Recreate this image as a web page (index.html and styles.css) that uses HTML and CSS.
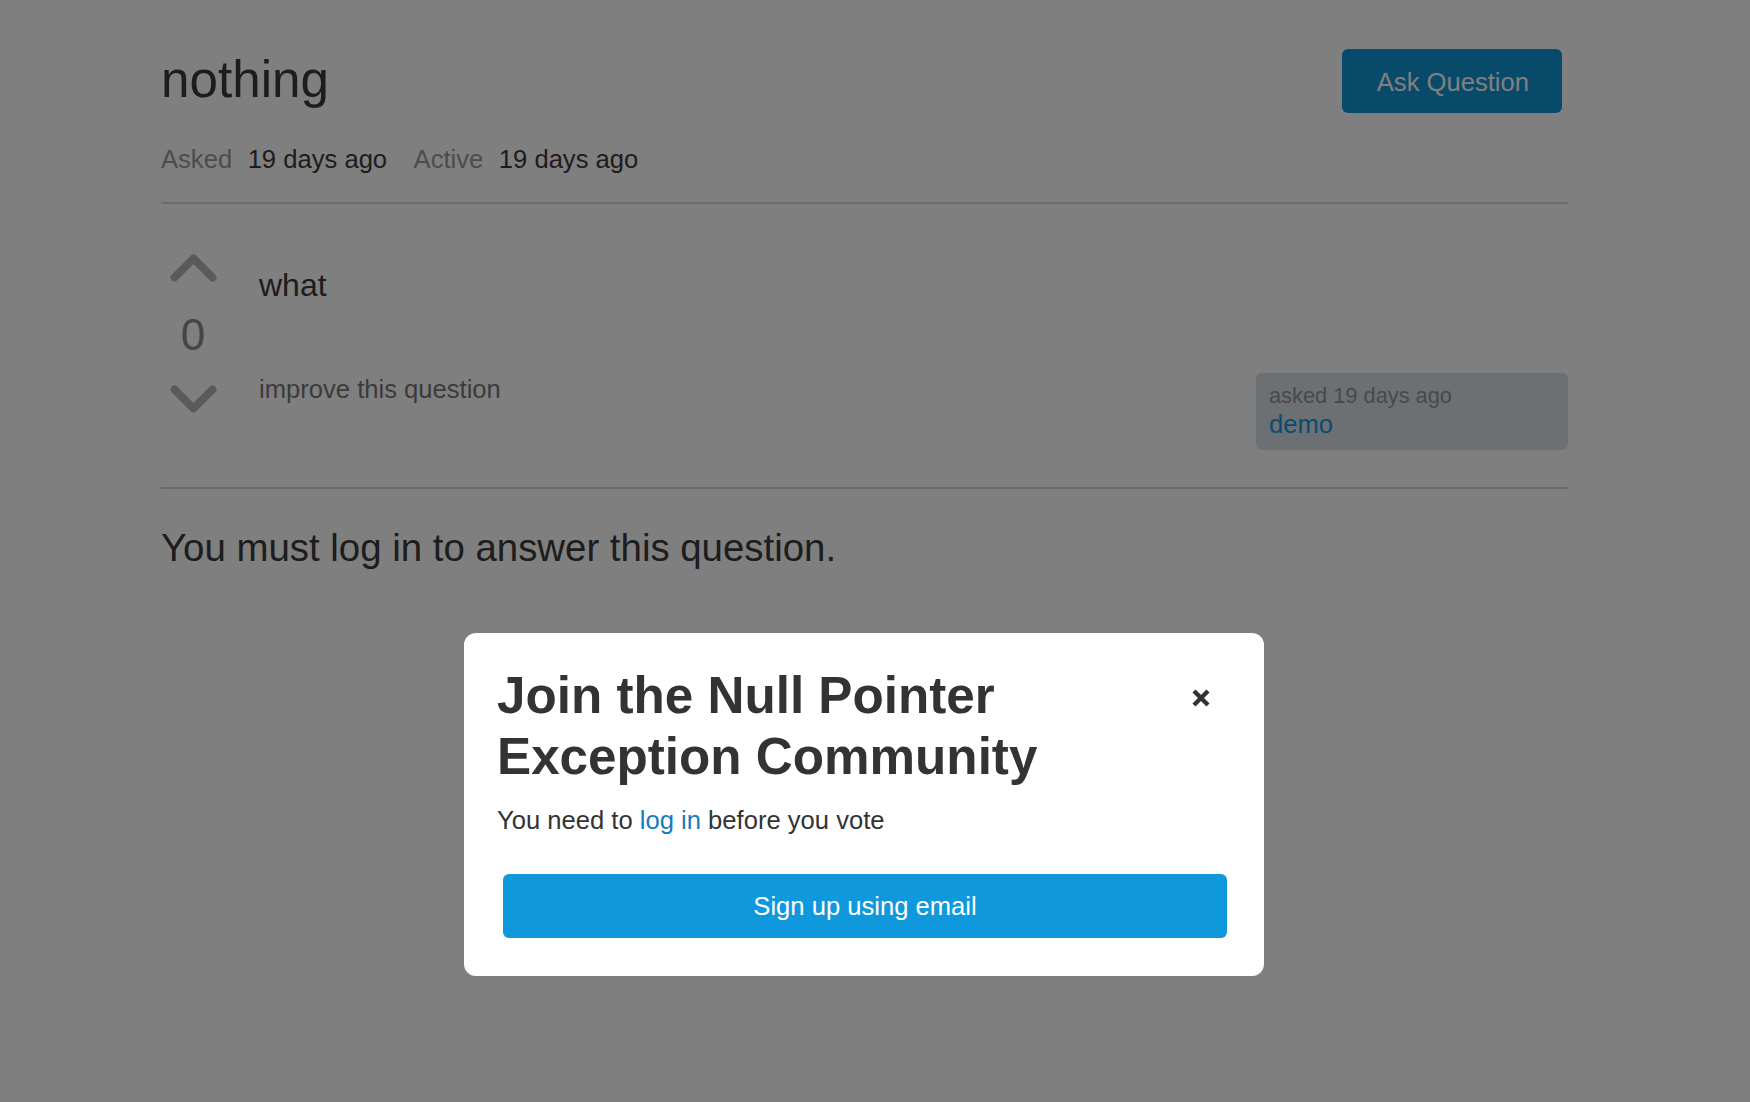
FILE: index.html
```html
<!DOCTYPE html>
<html lang="en">
<head>
<meta charset="utf-8">
<title>nothing</title>
<link rel="stylesheet" href="styles.css">
</head>
<body>
<div class="page">
  <header class="q-header">
    <h1 class="q-title">nothing</h1>
    <a class="btn-ask" href="#">Ask Question</a>
  </header>
  <div class="q-meta">
    <span class="meta-item"><span class="meta-label">Asked</span><span class="meta-value">19 days ago</span></span>
    <span class="meta-item"><span class="meta-label">Active</span><span class="meta-value">19 days ago</span></span>
  </div>
  <hr class="divider">
  <section class="post">
    <div class="vote">
      <svg class="chev" width="47" height="29" viewBox="0 0 47 29"><polyline points="4.5,24.5 23.5,5.5 42.5,24.5" fill="none" stroke="#b5b5b5" stroke-width="8" stroke-linecap="round" stroke-linejoin="round"/></svg>
      <div class="vote-count">0</div>
      <svg class="chev chev-down" width="47" height="29" viewBox="0 0 47 29"><polyline points="4.5,4.5 23.5,23.5 42.5,4.5" fill="none" stroke="#b5b5b5" stroke-width="8" stroke-linecap="round" stroke-linejoin="round"/></svg>
    </div>
    <div class="post-body">
      <p class="post-text">what</p>
      <div class="post-footer">
        <a class="improve" href="#">improve this question</a>
        <div class="author-card">
          <div class="author-time">asked 19 days ago</div>
          <a class="author-name" href="#">demo</a>
        </div>
      </div>
    </div>
  </section>
  <hr class="divider divider-2">
  <h2 class="login-note">You must log in to answer this question.</h2>
</div>

<div class="overlay">
  <div class="modal">
    <div class="modal-head">
      <h2 class="modal-title">Join the Null Pointer Exception Community</h2>
      <button class="modal-close" aria-label="Close">
        <svg width="18" height="18" viewBox="0 0 18 18"><path d="M2 2 L16 16 M16 2 L2 16" stroke="#333" stroke-width="4.4" stroke-linecap="butt"/></svg>
      </button>
    </div>
    <p class="modal-text">You need to <a href="#">log in</a> before you vote</p>
    <button class="btn-signup">Sign up using email</button>
  </div>
</div>
</body>
</html>
```

FILE: styles.css
```css
* { box-sizing: border-box; }

html, body {
  margin: 0;
  padding: 0;
  background: #fff;
  font-family: "Liberation Sans", Arial, sans-serif;
  font-size: 25.6px;
  color: #3a3a3a;
}

a { text-decoration: none; }

.page {
  padding: 49px 182px 0 161px;
}

.q-header {
  display: flex;
  justify-content: space-between;
  align-items: flex-start;
}

.q-title {
  margin: 0;
  font-size: 51.2px;
  line-height: 1.2;
  font-weight: normal;
  color: #3a3a3a;
}

.btn-ask {
  display: block;
  margin-right: 6px;
  padding: 13.8px 33px 11.8px 35px;
  line-height: 38.4px;
  background: #1094d4;
  color: #fff;
  border-radius: 6px;
  font-size: 25.6px;
}

.q-meta {
  margin-top: 27px;
  line-height: 38.4px;
  display: flex;
  gap: 26.5px;
}

.meta-item {
  display: flex;
  gap: 15.5px;
}

.meta-label { color: #999; }
.meta-value { color: #3a3a3a; }

.divider {
  margin: 24px 0 0;
  border: 0;
  border-top: 2px solid #d6d6d6;
  height: 0;
}

.post {
  display: flex;
  margin-top: 49px;
}

.vote {
  width: 64px;
  flex: none;
  display: flex;
  flex-direction: column;
  align-items: center;
  margin-right: 34px;
}

.chev { display: block; }

.vote-count {
  margin-top: 27px;
  font-size: 44px;
  line-height: 52.8px;
  color: #8a8a8a;
}

.chev-down { margin-top: 23px; }

.post-body {
  flex: 1;
  min-width: 0;
}

.post-text {
  margin: 12.7px 0 0;
  font-size: 32px;
  line-height: 38.4px;
  color: #3a3a3a;
}

.post-footer {
  display: flex;
  justify-content: space-between;
  align-items: flex-start;
  margin-top: 68px;
}

.improve {
  color: #777;
  line-height: 30.7px;
  margin-top: 1px;
}

.author-card {
  width: 312px;
  padding: 10px 13px 10.5px;
  background: #d9e1e7;
  border-radius: 6px;
}

.author-time {
  font-size: 21.8px;
  line-height: 1.2;
  color: #929292;
}

.author-name {
  display: block;
  font-size: 25.6px;
  line-height: 1.2;
  color: #1596e0;
}

.divider-2 { margin-top: 37px; }

.login-note {
  margin: 36px 0 0;
  font-size: 38.4px;
  line-height: 1.2;
  font-weight: normal;
  color: #3a3a3a;
}

.overlay {
  position: fixed;
  inset: 0;
  background: rgba(0, 0, 0, 0.5);
}

.modal {
  position: absolute;
  left: 464px;
  top: 633px;
  width: 800px;
  padding: 32px 32px 32px 33px;
  background: #fff;
  border-radius: 12px;
}

.modal-head {
  display: flex;
  justify-content: space-between;
  align-items: flex-start;
}

.modal-title {
  margin: 0;
  max-width: 620px;
  font-size: 51.2px;
  line-height: 61.4px;
  font-weight: bold;
  color: #333;
}

.modal-close {
  margin: 24px 22px 0 0;
  padding: 0;
  border: 0;
  background: none;
  display: block;
  width: 18px;
  height: 18px;
}

.modal-close svg { display: block; }

.modal-text {
  margin: 13px 0 0;
  font-size: 25.6px;
  line-height: 38.4px;
  color: #333;
}

.modal-text a { color: #1a7bbb; }

.btn-signup {
  display: block;
  width: calc(100% - 11px);
  margin: 34.5px 6px 6px;
  padding: 13px 0;
  border: 0;
  border-radius: 6px;
  background: #1098dc;
  color: #fff;
  font-family: "Liberation Sans", Arial, sans-serif;
  font-size: 25.6px;
  line-height: 38.4px;
  text-align: center;
}
```
